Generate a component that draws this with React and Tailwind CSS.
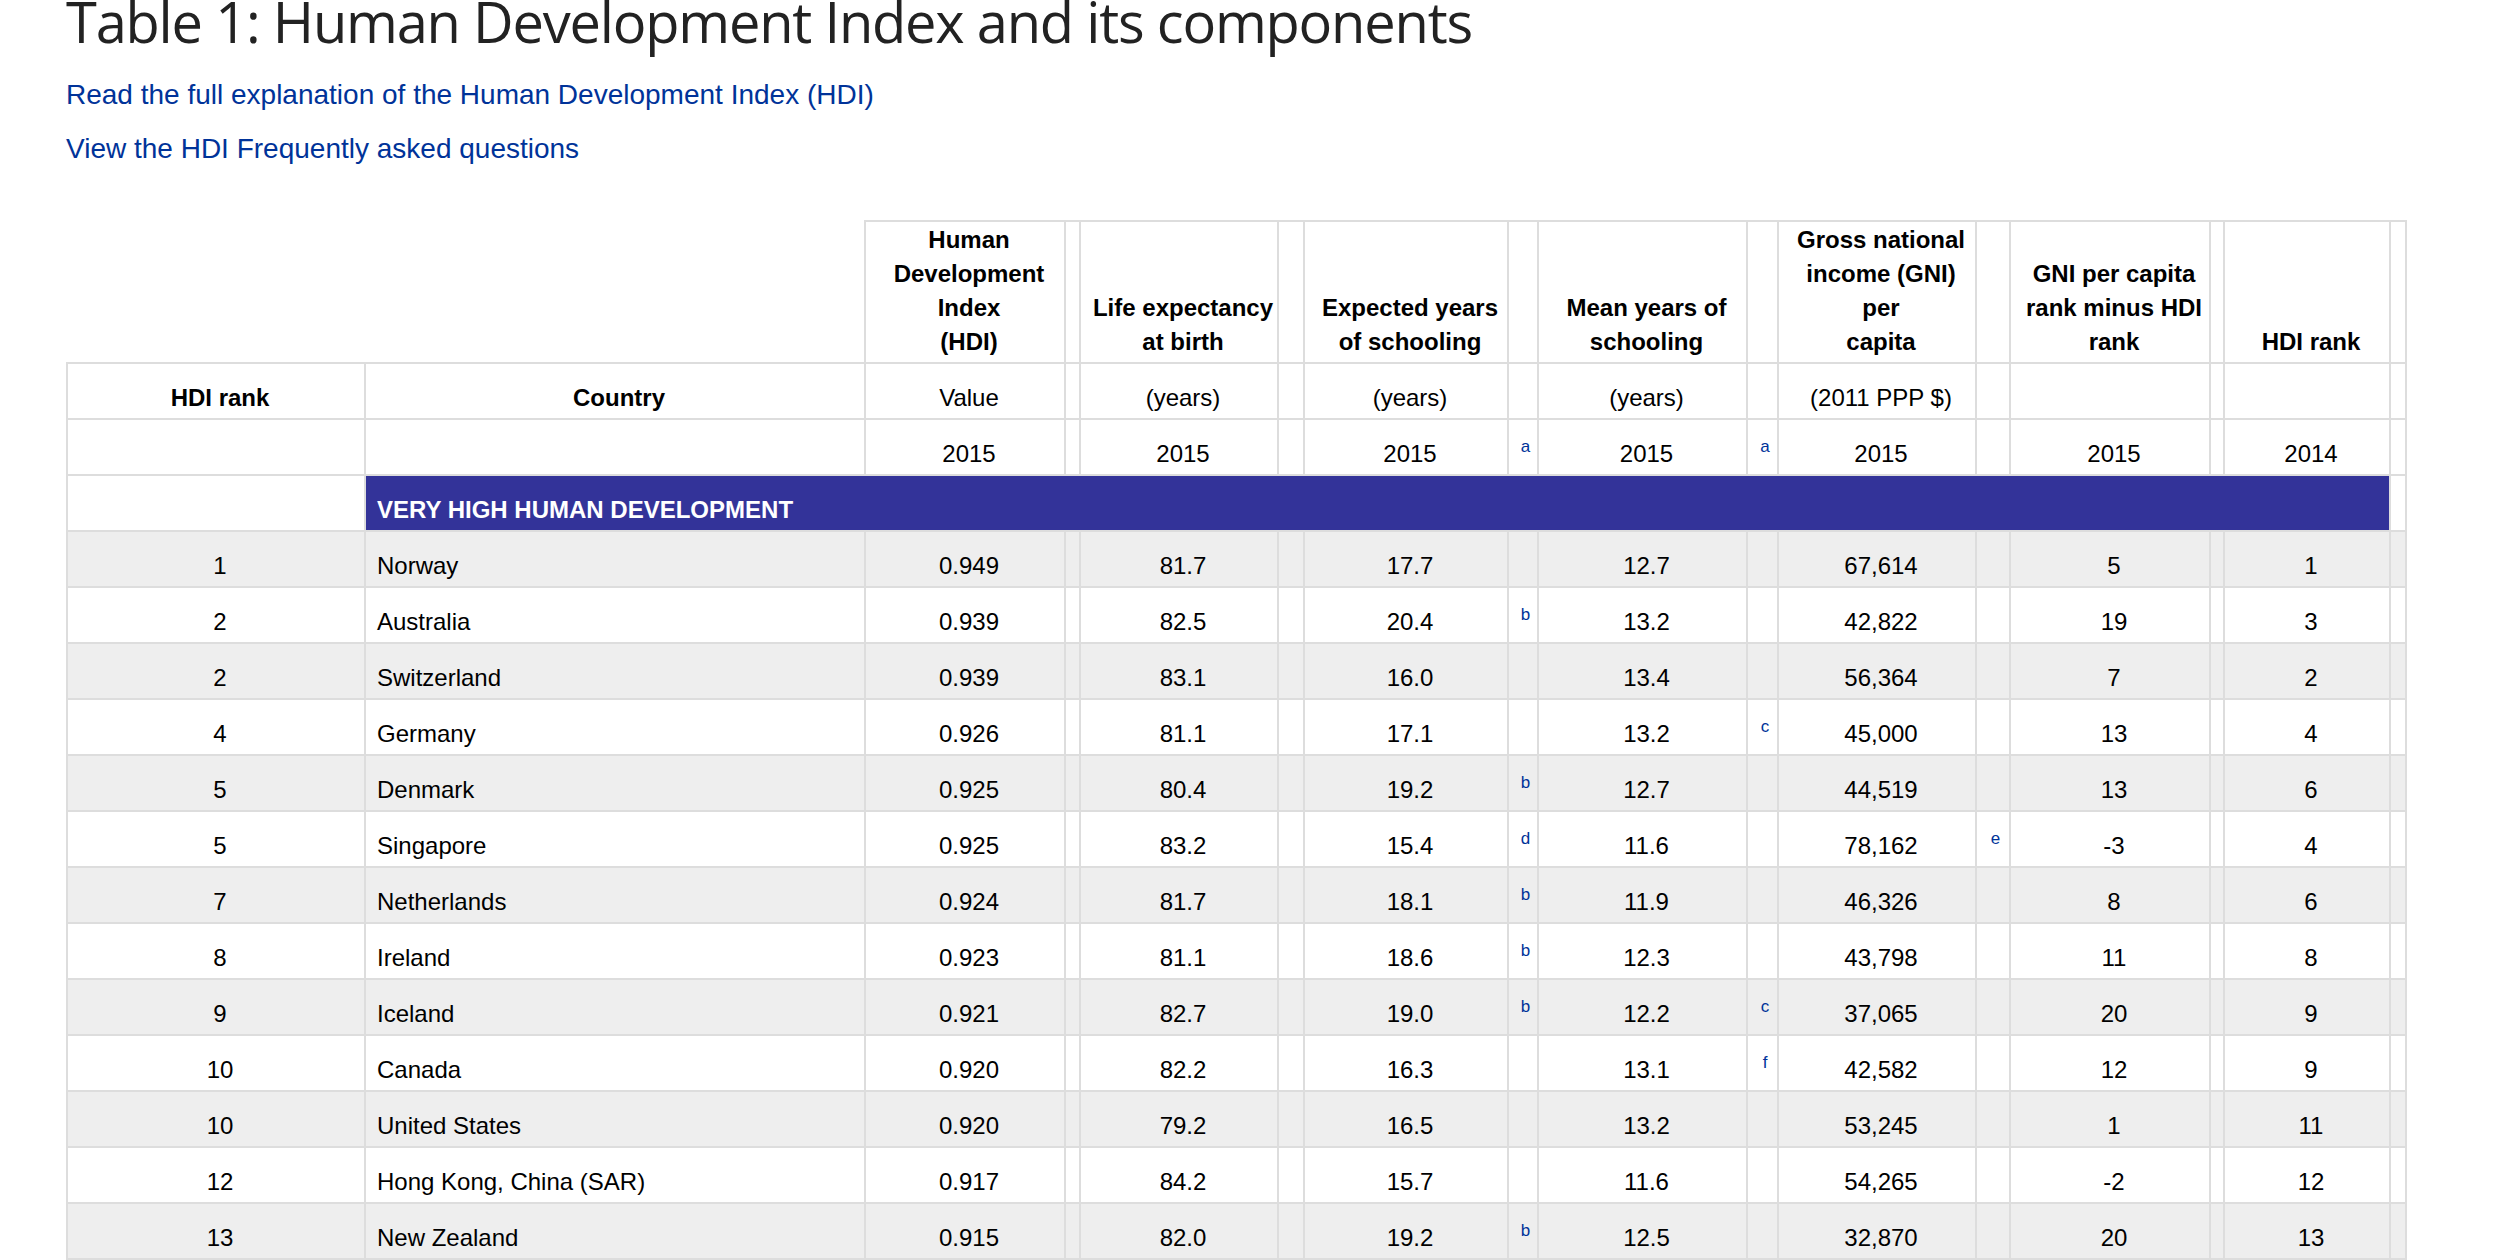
import React from "react";

const rows = [
  ["1", "Norway", "0.949", "81.7", "17.7", "", "12.7", "", "67,614", "", "5", "1"],
  ["2", "Australia", "0.939", "82.5", "20.4", "b", "13.2", "", "42,822", "", "19", "3"],
  ["2", "Switzerland", "0.939", "83.1", "16.0", "", "13.4", "", "56,364", "", "7", "2"],
  ["4", "Germany", "0.926", "81.1", "17.1", "", "13.2", "c", "45,000", "", "13", "4"],
  ["5", "Denmark", "0.925", "80.4", "19.2", "b", "12.7", "", "44,519", "", "13", "6"],
  ["5", "Singapore", "0.925", "83.2", "15.4", "d", "11.6", "", "78,162", "e", "-3", "4"],
  ["7", "Netherlands", "0.924", "81.7", "18.1", "b", "11.9", "", "46,326", "", "8", "6"],
  ["8", "Ireland", "0.923", "81.1", "18.6", "b", "12.3", "", "43,798", "", "11", "8"],
  ["9", "Iceland", "0.921", "82.7", "19.0", "b", "12.2", "c", "37,065", "", "20", "9"],
  ["10", "Canada", "0.920", "82.2", "16.3", "", "13.1", "f", "42,582", "", "12", "9"],
  ["10", "United States", "0.920", "79.2", "16.5", "", "13.2", "", "53,245", "", "1", "11"],
  ["12", "Hong Kong, China (SAR)", "0.917", "84.2", "15.7", "", "11.6", "", "54,265", "", "-2", "12"],
  ["13", "New Zealand", "0.915", "82.0", "19.2", "b", "12.5", "", "32,870", "", "20", "13"],
];

// shared cell styles
const td = "border-2 border-[#ddd] align-bottom leading-[34px] pb-[3px] pl-[8px] pr-0 text-center whitespace-nowrap";
const th = "border-2 border-[#ddd] align-bottom leading-[34px] pb-[3px] pl-[8px] pr-0 text-center font-bold whitespace-nowrap";
const note = "border-2 border-[#ddd] align-bottom leading-[34px] pb-[10px] pl-[5px] pr-0 text-center text-[17px] text-[#039]";

const widths = [
  "w-[298px]", "w-[500px]", "w-[200px]", "w-[15px]", "w-[198px]", "w-[26px]", "w-[204px]", "w-[30px]",
  "w-[209px]", "w-[31px]", "w-[198px]", "w-[34px]", "w-[200px]", "w-[14px]", "w-[166px]", "w-[16px]",
];

export default function App() {
  return (
    <div className="min-h-screen bg-white pl-[66px] font-['Liberation_Sans',Arial,sans-serif] text-black">
      <h1 className="-mt-[7px] font-['Open_Sans',sans-serif] text-[56px] font-normal leading-none tracking-[-1.2px] text-[#222]">
        Table 1: Human Development Index and its components
      </h1>

      <div className="mt-[32px] flex flex-col gap-[26px] text-[28px] leading-[28px] text-[#039]">
        <a href="#">Read the full explanation of the Human Development Index (HDI)</a>
        <a href="#">View the HDI Frequently asked questions</a>
      </div>

      <table className="mt-[57px] w-[2341px] table-fixed border-collapse text-[24px]">
        <colgroup>
          {widths.map((w, i) => (
            <col key={i} className={w} />
          ))}
        </colgroup>
        <thead>
          <tr className="h-[142px]">
            <th className="border-0" />
            <th className="border-0" />
            <th className={th}>Human<br />Development<br />Index<br />(HDI)</th>
            <th className={th} />
            <th className={th}>Life expectancy<br />at birth</th>
            <th className={th} />
            <th className={th}>Expected years<br />of schooling</th>
            <th className={th} />
            <th className={th}>Mean years of<br />schooling</th>
            <th className={th} />
            <th className={th}>Gross national<br />income (GNI)<br />per<br />capita</th>
            <th className={th} />
            <th className={th}>GNI per capita<br />rank minus HDI<br />rank</th>
            <th className={th} />
            <th className={th}>HDI rank</th>
            <th className={th} />
          </tr>
          <tr className="h-[56px]">
            <th className={th}>HDI rank</th>
            <th className={th}>Country</th>
            <td className={td}>Value</td>
            <td className={td} />
            <td className={td}>(years)</td>
            <td className={td} />
            <td className={td}>(years)</td>
            <td className={td} />
            <td className={td}>(years)</td>
            <td className={td} />
            <td className={td}>(2011 PPP $)</td>
            <td className={td} />
            <td className={td} />
            <td className={td} />
            <td className={td} />
            <td className={td} />
          </tr>
          <tr className="h-[56px]">
            <td className={td} />
            <td className={td} />
            <td className={td}>2015</td>
            <td className={note} />
            <td className={td}>2015</td>
            <td className={note} />
            <td className={td}>2015</td>
            <td className={note}>a</td>
            <td className={td}>2015</td>
            <td className={note}>a</td>
            <td className={td}>2015</td>
            <td className={note} />
            <td className={td}>2015</td>
            <td className={note} />
            <td className={td}>2014</td>
            <td className={note} />
          </tr>
        </thead>
        <tbody>
          <tr className="h-[56px]">
            <td className={td} />
            <td
              colSpan={14}
              className="border-2 border-[#ddd] bg-[#333399] pb-[3px] pl-[11px] text-left align-bottom font-bold leading-[34px] text-white"
            >
              VERY HIGH HUMAN DEVELOPMENT
            </td>
            <td className={td} />
          </tr>
          {rows.map((r, i) => (
            <tr key={r[1]} className={i % 2 === 0 ? "h-[56px] bg-[#eee]" : "h-[56px] bg-white"}>
              <td className={td}>{r[0]}</td>
              <td className="border-2 border-[#ddd] pb-[3px] pl-[11px] text-left align-bottom leading-[34px] whitespace-nowrap">
                {r[1]}
              </td>
              <td className={td}>{r[2]}</td>
              <td className={note} />
              <td className={td}>{r[3]}</td>
              <td className={note} />
              <td className={td}>{r[4]}</td>
              <td className={note}>{r[5]}</td>
              <td className={td}>{r[6]}</td>
              <td className={note}>{r[7]}</td>
              <td className={td}>{r[8]}</td>
              <td className={note}>{r[9]}</td>
              <td className={td}>{r[10]}</td>
              <td className={note} />
              <td className={td}>{r[11]}</td>
              <td className={note} />
            </tr>
          ))}
        </tbody>
      </table>
    </div>
  );
}
